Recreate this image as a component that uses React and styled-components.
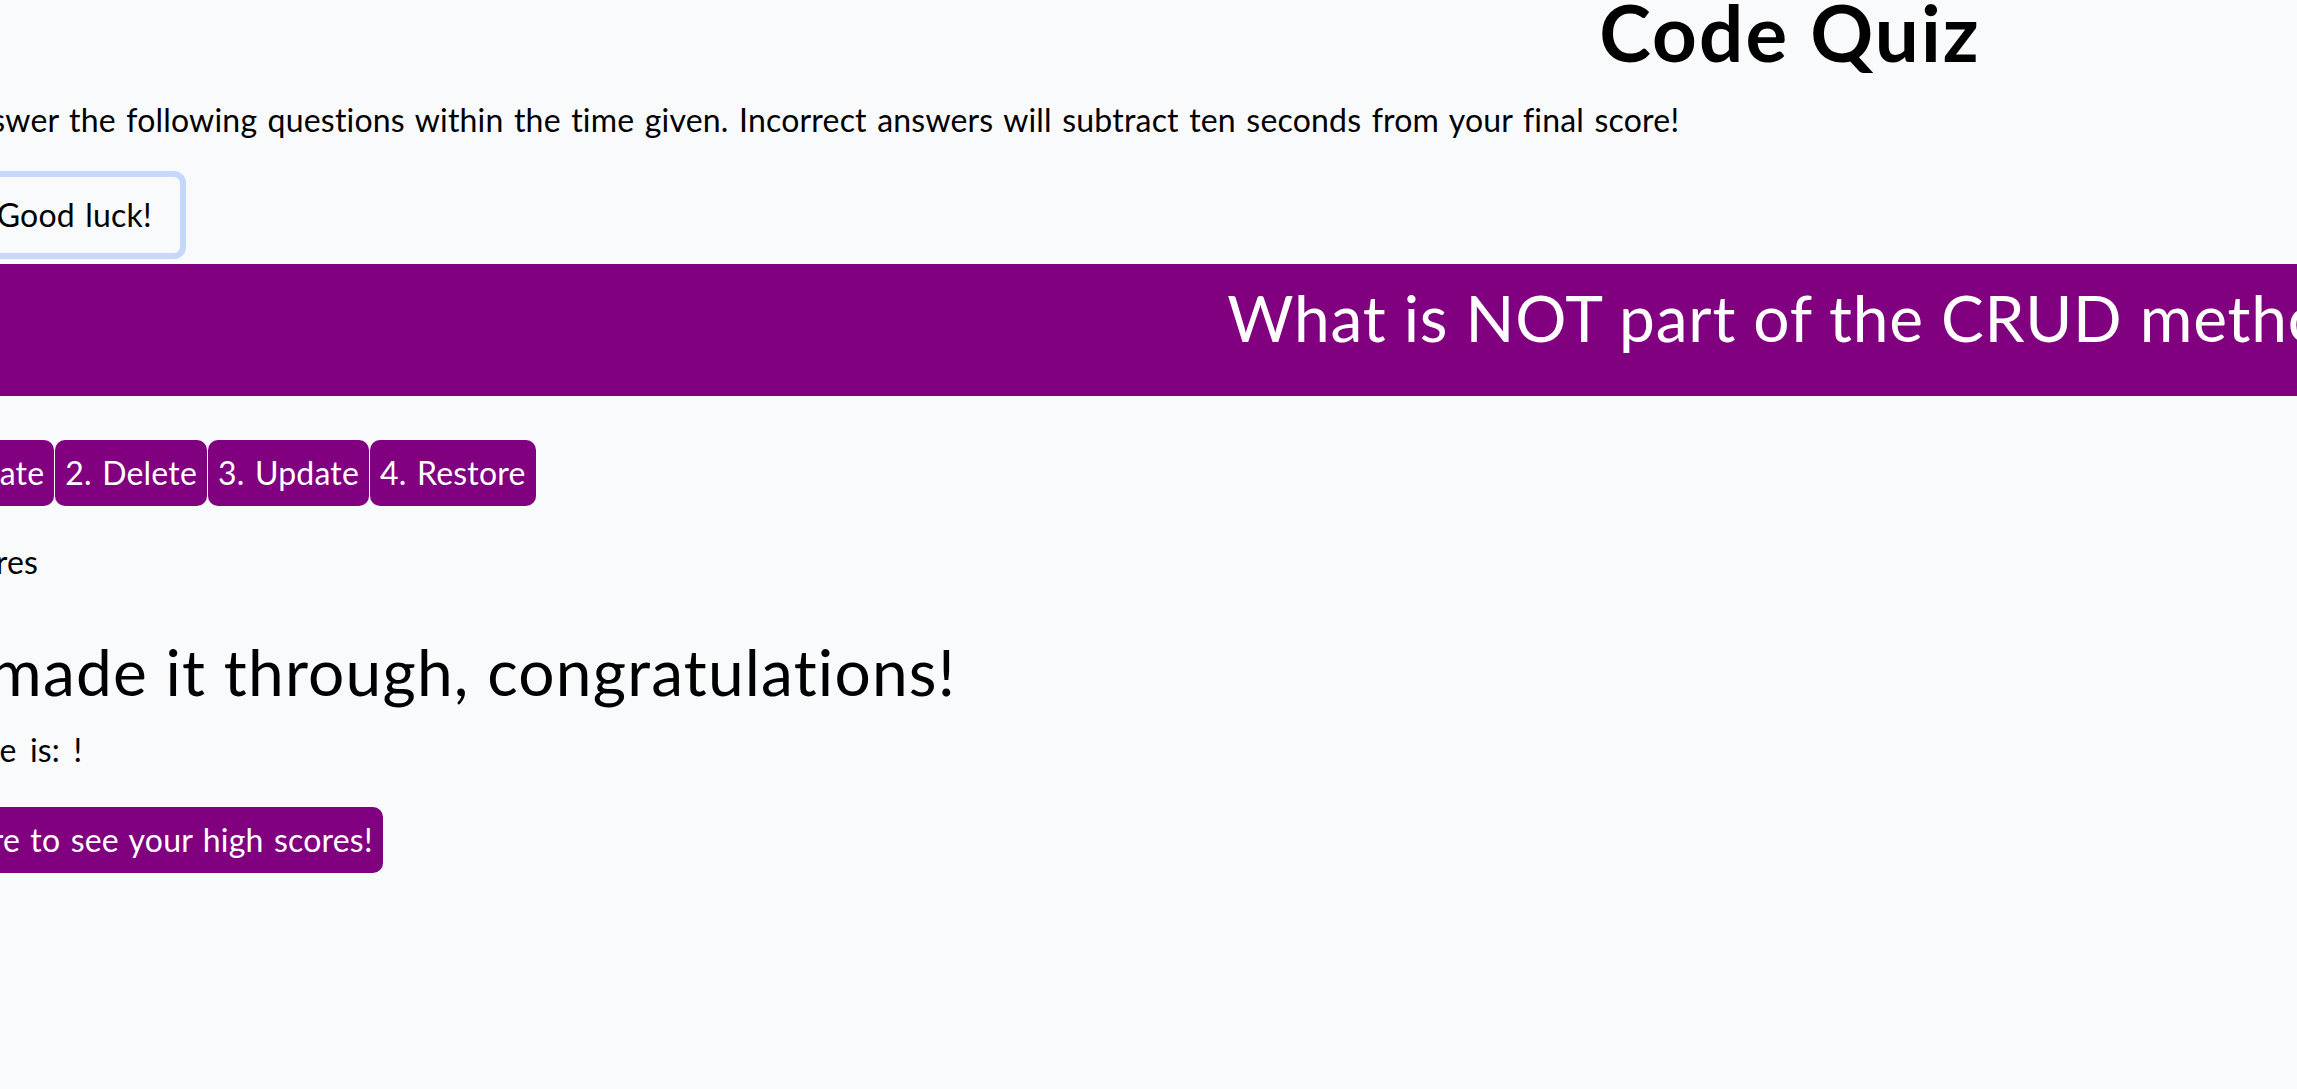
import React from "react";
import styled, { createGlobalStyle } from "styled-components";

const GlobalStyle = createGlobalStyle`
  html, body {
    margin: 0;
    padding: 0;
    background: #f8fafc;
    overflow: hidden;
  }
  body {
    font-family: Lato, "Open Sans", sans-serif;
    color: #000;
  }
`;

const Stage = styled.main`
  width: 3854px;
  margin-left: -137px;
  display: flex;
  flex-direction: column;
  align-items: flex-start;
`;

const Title = styled.h1`
  align-self: stretch;
  margin: 0;
  text-align: center;
  font-size: 78px;
  line-height: 64px;
  font-weight: 700;
  letter-spacing: 2.1px;
`;

const BodyText = styled.p`
  margin: ${(p) => p.$top}px 0 0;
  font-size: 32px;
  line-height: 44px;
  letter-spacing: 0.2px;
  word-spacing: ${(p) => p.$words || 2}px;
`;

const StartButton = styled.button`
  margin-top: 29px;
  padding: 16px 28px;
  border: 6px solid #c5d8fb;
  border-radius: 12px;
  background: transparent;
  color: #000;
  font-family: inherit;
  font-size: 32px;
  line-height: 44px;
  letter-spacing: 0.2px;
  word-spacing: 2px;
`;

const QuestionBar = styled.section`
  align-self: stretch;
  margin-top: 5px;
  padding: 10px 0 34px;
  background: #800080;
  color: #fff;
`;

const Question = styled.h2`
  margin: 0;
  padding-left: 66px;
  text-align: center;
  font-size: 64px;
  line-height: 88px;
  font-weight: 400;
  letter-spacing: 0.8px;
`;

const AnswerRow = styled.div`
  display: flex;
  gap: 1px;
  margin-top: 44px;
  padding-left: 40px;
`;

const PurpleButton = styled.button`
  margin-top: ${(p) => p.$top || 0}px;
  padding: 11px 10px 11px ${(p) => p.$lead || 10}px;
  border: none;
  border-radius: 10px;
  background: #800080;
  color: #fff;
  font-family: inherit;
  font-size: 32px;
  line-height: 44px;
  letter-spacing: 0.2px;
  word-spacing: 2px;
`;

const Congrats = styled.h2`
  margin: 48px 0 0;
  font-size: 64px;
  line-height: 80px;
  font-weight: 400;
  letter-spacing: 1.2px;
`;

const answers = ["1. Create", "2. Delete", "3. Update", "4. Restore"];

export default function App() {
  return (
    <>
      <GlobalStyle />
      <Stage>
        <Title>Code Quiz</Title>
        <BodyText $top={34}>
          Try to answer the following questions within the time given. Incorrect answers will subtract ten seconds from your final score!
        </BodyText>
        <StartButton>Begin! Good luck!</StartButton>
        <QuestionBar>
          <Question>What is NOT part of the CRUD methods?</Question>
        </QuestionBar>
        <AnswerRow>
          {answers.map((a) => (
            <PurpleButton key={a}>{a}</PurpleButton>
          ))}
        </AnswerRow>
        <BodyText $top={34}>View Scores</BodyText>
        <Congrats>You made it through, congratulations!</Congrats>
        <BodyText $top={16} $words={5}>Your score is: !</BodyText>
        <PurpleButton $top={35} $lead={14}>Click here to see your high scores!</PurpleButton>
      </Stage>
    </>
  );
}
